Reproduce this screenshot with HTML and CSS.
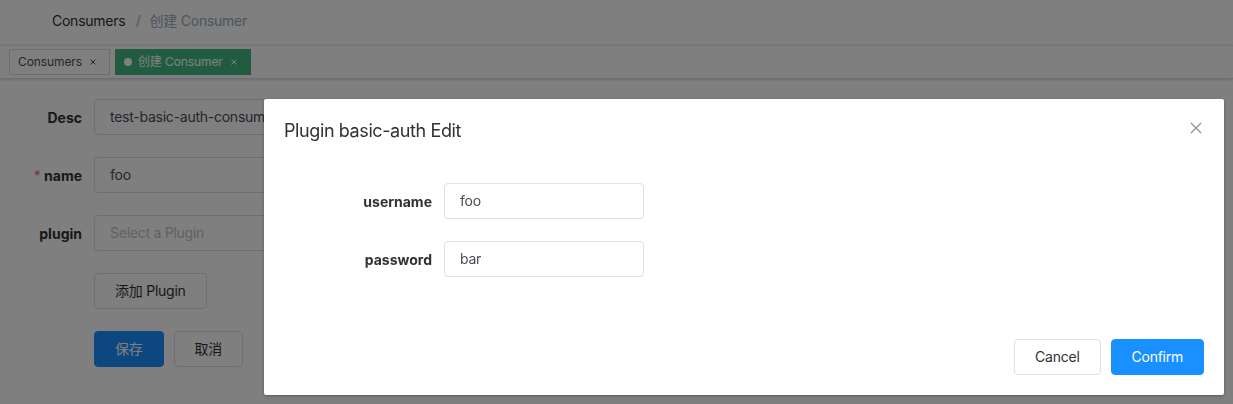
FILE: index.html
```html
<!DOCTYPE html>
<html lang="en">
<head>
<meta charset="utf-8">
<title>Consumer</title>
<link rel="stylesheet" href="styles.css">
</head>
<body>
<div class="app">
  <header class="navbar">
    <nav class="breadcrumb">
      <span class="crumb">Consumers</span>
      <span class="sep">/</span>
      <span class="crumb current">创建 Consumer</span>
    </nav>
  </header>
  <div class="tags">
    <span class="tag">Consumers<svg class="tag-close" viewBox="0 0 16 16" width="16" height="16"><path d="M5.5 5.5L10.5 10.5M10.5 5.5L5.5 10.5"/></svg></span>
    <span class="tag active"><i class="dot"></i>创建 Consumer<svg class="tag-close" viewBox="0 0 16 16" width="16" height="16"><path d="M5.5 5.5L10.5 10.5M10.5 5.5L5.5 10.5"/></svg></span>
  </div>
  <main class="main">
    <form class="form">
      <div class="form-item">
        <label class="label">Desc</label>
        <div class="input wide">test-basic-auth-consumer</div>
      </div>
      <div class="form-item">
        <label class="label"><span class="req">*</span> name</label>
        <div class="input wide">foo</div>
      </div>
      <div class="form-item">
        <label class="label">plugin</label>
        <div class="input wide placeholder">Select a Plugin</div>
      </div>
      <div class="form-item">
        <span class="label"></span>
        <button type="button" class="btn">添加 Plugin</button>
      </div>
      <div class="form-item">
        <span class="label"></span>
        <div class="btn-row">
          <button type="button" class="btn primary">保存</button>
          <button type="button" class="btn">取消</button>
        </div>
      </div>
    </form>
  </main>
</div>

<div class="mask"></div>

<div class="dialog">
  <div class="dialog-header">
    <span class="dialog-title">Plugin basic-auth Edit</span>
    <svg class="dialog-close" viewBox="0 0 16 16" width="16" height="16"><path d="M3 3L13 13M13 3L3 13"/></svg>
  </div>
  <div class="dialog-body">
    <div class="d-item">
      <label class="d-label">username</label>
      <div class="input d-input">foo</div>
    </div>
    <div class="d-item">
      <label class="d-label">password</label>
      <div class="input d-input">bar</div>
    </div>
  </div>
  <div class="dialog-footer">
    <button type="button" class="btn">Cancel</button>
    <button type="button" class="btn primary">Confirm</button>
  </div>
</div>
</body>
</html>
```

FILE: styles.css
```css
* { box-sizing: border-box; }

html, body {
  margin: 0;
  padding: 0;
  height: 100%;
}

body {
  font-family: Inter, "Noto Sans CJK SC", sans-serif;
  font-size: 14px;
  letter-spacing: -0.25px;
  color: #303133;
  background: #fff;
  overflow: hidden;
}

.app {
  min-height: 100%;
  background: #fff;
}

.navbar {
  height: 45px;
  display: flex;
  align-items: center;
  padding: 0 0 4px 52px;
  background: #fff;
}

.breadcrumb {
  font-size: 14px;
  line-height: 20px;
  display: flex;
  align-items: center;
}

.crumb { color: #303133; }
.crumb.current { color: #97a8be; }

.sep {
  margin: 0 9px 0 10px;
  color: #c0c4cc;
  font-weight: 700;
}

.tags {
  height: 34px;
  background: #fff;
  border-top: 1px solid #e6e6e6;
  border-bottom: 1px solid #d8dce5;
  box-shadow: 0 1px 3px 0 rgba(0, 0, 0, .12), 0 0 3px 0 rgba(0, 0, 0, .04);
  display: flex;
  align-items: flex-start;
  padding: 3px 0 0 9px;
  gap: 5px;
}

.tag {
  display: inline-flex;
  align-items: center;
  height: 26px;
  line-height: 26px;
  border: 1px solid #d8dce5;
  color: #495060;
  background: #fff;
  padding: 0 8px;
  font-size: 12px;
  letter-spacing: -0.1px;
}

.tag.active {
  background: #42b983;
  border-color: #42b983;
  color: #fff;
}

.dot {
  display: inline-block;
  width: 8px;
  height: 8px;
  border-radius: 50%;
  background: #fff;
  margin-right: 6px;
}

.tag-close {
  margin-left: 3px;
  fill: none;
  stroke: currentColor;
  stroke-width: 1;
}

.main {
  padding: 20px 0 0 20px;
}

.form-item {
  display: flex;
  align-items: center;
  margin-bottom: 22px;
}

.label {
  width: 74px;
  flex: none;
  text-align: right;
  padding-right: 12px;
  font-weight: 700;
  letter-spacing: 0;
  color: #303133;
  font-size: 14px;
}

.req {
  color: #f56c6c;
  font-weight: 400;
}

.input {
  height: 36px;
  line-height: 34px;
  border: 1px solid #dcdfe6;
  border-radius: 4px;
  padding: 0 15px;
  color: #4a4d55;
  background: #fff;
  font-size: 14px;
  white-space: nowrap;
  overflow: hidden;
}

.input.wide { width: 420px; }
.input.placeholder { color: #c0c4cc; }

.btn {
  height: 36px;
  padding: 0 20px;
  font-family: inherit;
  font-size: 14px;
  letter-spacing: inherit;
  color: #303133;
  background: #fff;
  border: 1px solid #dcdfe6;
  border-radius: 4px;
  line-height: 34px;
  cursor: pointer;
}

.btn.primary {
  background: #1890ff;
  border-color: #1890ff;
  color: #fff;
}

.btn-row {
  display: flex;
  gap: 10px;
}

.mask {
  position: fixed;
  inset: 0;
  background: rgba(0, 0, 0, .5);
}

.dialog {
  position: absolute;
  top: 99px;
  left: 264px;
  width: 960px;
  background: #fff;
  border-radius: 2px;
  box-shadow: 0 1px 3px rgba(0, 0, 0, .3);
}

.dialog-header {
  position: relative;
  padding: 20px 20px 10px;
}

.dialog-title {
  font-size: 18px;
  line-height: 24px;
  letter-spacing: -0.4px;
  color: #303133;
}

.dialog-close {
  position: absolute;
  top: 21px;
  right: 20px;
  fill: none;
  stroke: #909399;
  stroke-width: 1.3;
}

.dialog-body {
  padding: 30px 20px;
}

.d-item {
  display: flex;
  align-items: center;
  margin-bottom: 22px;
}

.d-label {
  width: 160px;
  flex: none;
  text-align: right;
  padding-right: 12px;
  font-weight: 700;
  letter-spacing: 0;
  color: #303133;
  font-size: 14px;
}

.d-input { width: 200px; }

.dialog-footer {
  padding: 10px 20px 20px;
  display: flex;
  justify-content: flex-end;
  gap: 10px;
}
```
